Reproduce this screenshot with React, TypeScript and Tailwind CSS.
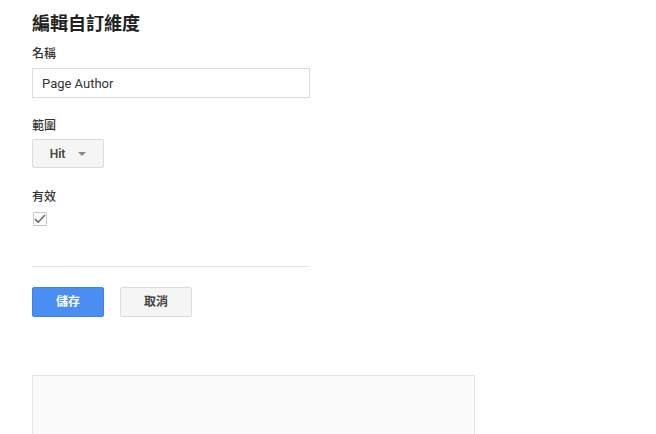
import { useState } from "react";

export default function App() {
  const [name, setName] = useState("Page Author");
  const [active, setActive] = useState(true);

  return (
    <div
      className="h-screen overflow-hidden bg-white pl-8 pt-3 text-[#222]"
      style={{ fontFamily: '"Roboto", "Noto Sans CJK TC", "Noto Sans", sans-serif' }}
    >
      <h1 className="text-[18px] font-bold leading-[24px] text-[#212121]">編輯自訂維度</h1>

      {/* 名稱 */}
      <div className="mt-[10px] text-[12px] leading-[16px] font-medium text-[#333]">名稱</div>
      <input
        value={name}
        onChange={(e) => setName(e.target.value)}
        className="mt-[6px] block h-[30px] w-[278px] border border-[#dcdcdc] bg-white px-[9px] text-[13px] text-[#333] outline-none"
      />

      {/* 範圍 */}
      <div className="mt-[20px] text-[12px] leading-[16px] font-medium text-[#333]">範圍</div>
      <button className="mt-[5px] flex h-[29px] w-[72px] items-center justify-center gap-[13px] rounded-[2px] border border-[#dcdcdc] bg-[#f5f5f5] text-[12px] font-semibold text-[#444]">
        <span>Hit</span>
        <svg width="8" height="4" viewBox="0 0 8 4">
          <path d="M0 0h8L4 4z" fill="#888" />
        </svg>
      </button>

      {/* 有效 */}
      <div className="mt-[21px] text-[12px] leading-[16px] font-medium text-[#333]">有效</div>
      <button
        onClick={() => setActive(!active)}
        className="ml-px mt-[7px] flex h-[14px] w-[14px] items-center justify-center rounded-[1px] border border-[#c6c6c6] bg-white"
      >
        {active && (
          <svg width="12" height="10" viewBox="0 0 12 10">
            <path d="M1 5.2 4.2 8.2 11 1" fill="none" stroke="#666" strokeWidth="1.6" />
          </svg>
        )}
      </button>

      <div className="mt-[40px] h-px w-[278px] bg-[#e5e5e5]" />

      <div className="mt-[20px] flex gap-4">
        <button className="h-[30px] w-[72px] rounded-[2px] border border-[#3d82f0] bg-[#4a8ef2] text-[12px] font-bold text-white">
          儲存
        </button>
        <button className="h-[30px] w-[72px] rounded-[2px] border border-[#dcdcdc] bg-[#f5f5f5] text-[12px] font-bold text-[#444]">
          取消
        </button>
      </div>

      <div className="mt-[58px] h-[100px] w-[443px] border border-[#e5e5e5] bg-[#fafafa]" />
    </div>
  );
}
